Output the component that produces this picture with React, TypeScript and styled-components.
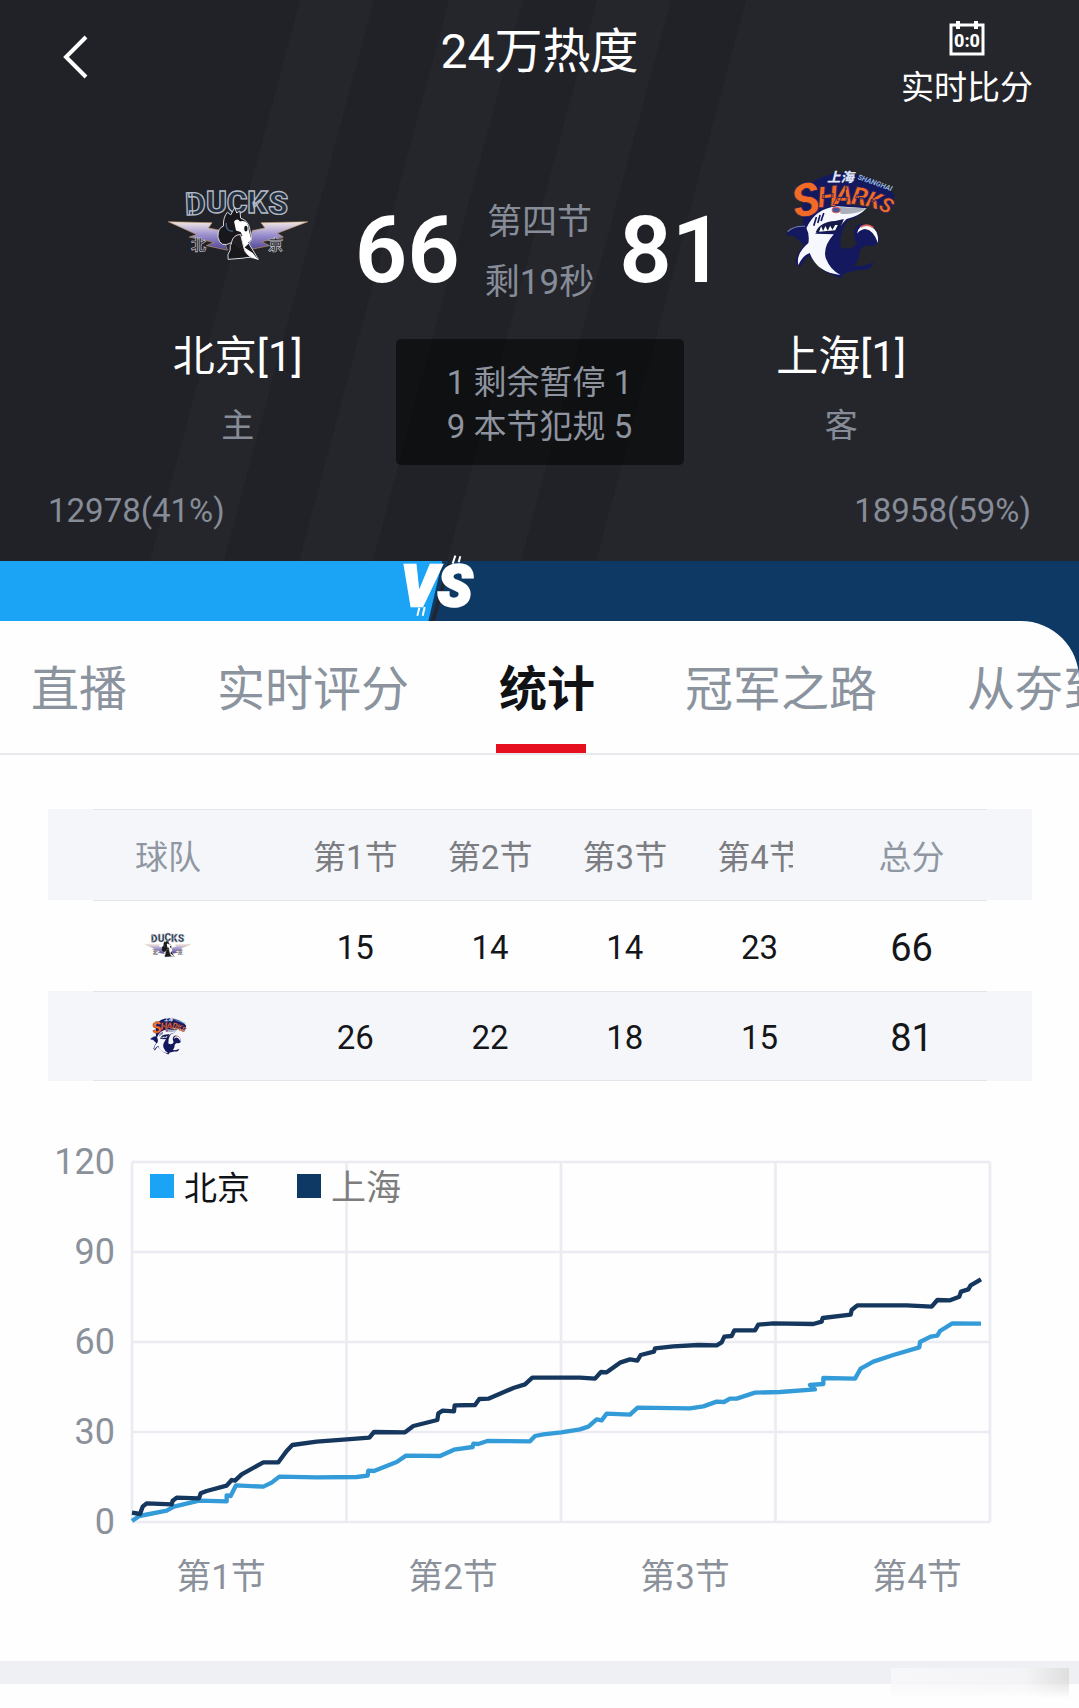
import React from "react";
import styled, { createGlobalStyle } from "styled-components";

const GlobalStyle = createGlobalStyle`
  * { box-sizing: border-box; }
  body {
    margin: 0;
    background: #fefefe;
    font-family: Roboto, "Noto Sans CJK SC", sans-serif;
    color: #15161a;
  }
  button { font: inherit; color: inherit; background: none; border: 0; padding: 0; cursor: pointer; }
`;

const muted = "#868c98";
const homeBlue = "#1ba3f5";
const awayNavy = "#0e3965";

const Page = styled.main`
  overflow: hidden;
`;

const Hero = styled.header`
  position: relative;
  background: #212227;
`;

const Stripes = styled.svg`
  position: absolute;
  inset: 0;
  width: 100%;
  height: 100%;
`;

const HeroContent = styled.div`
  position: relative;
`;

const TopBar = styled.div`
  display: grid;
  grid-template-columns: 1fr auto 1fr;
  height: 110px;
  padding: 0 46px;
  color: #fff;
`;

const BackButton = styled.button`
  justify-self: start;
  display: flex;
  align-items: center;
  height: 114px;
  padding-left: 14px;
`;

const Title = styled.h1`
  margin: 0;
  padding-top: 22px;
  font-size: 48px;
  line-height: 60px;
  font-weight: 400;
`;

const LiveScoreButton = styled.button`
  justify-self: end;
  display: flex;
  flex-direction: column;
  align-items: center;
  gap: 12px;
  padding-top: 21px;
  font-size: 33px;
  line-height: 40px;
`;

const Scoreboard = styled.div`
  display: grid;
  grid-template-columns: 1fr 364px 1fr;
  padding: 0 118px;
`;

const Team = styled.div`
  display: flex;
  flex-direction: column;
  align-items: center;
  padding-top: 55px;
`;

const LogoBox = styled.div`
  display: flex;
  align-items: center;
  height: 120px;
`;

const TeamName = styled.div`
  margin-top: 42px;
  font-size: 42px;
  line-height: 60px;
  color: #fff;
  white-space: nowrap;
`;

const TeamSide = styled.div`
  margin-top: 20px;
  font-size: 33px;
  line-height: 38px;
  color: ${muted};
`;

const Center = styled.div`
  display: flex;
  flex-direction: column;
  align-items: center;
  gap: 28px;
  padding-top: 81px;
`;

const ScoreRow = styled.div`
  display: flex;
  align-items: center;
  gap: 25px;
  height: 120px;
`;

const Score = styled.strong`
  font-size: 92px;
  line-height: 120px;
  font-weight: 600;
  color: #fff;
`;

const Clock = styled.div`
  padding-top: 4px;
  font-size: 35px;
  line-height: 60px;
  text-align: center;
  color: ${muted};
  white-space: nowrap;
`;

const FoulBox = styled.div`
  width: 288px;
  padding: 22px 0 16px;
  border-radius: 5px;
  background: rgba(0, 0, 0, 0.52);
  font-size: 33px;
  line-height: 44px;
  text-align: center;
  color: #8d939f;
`;

const HeatRow = styled.div`
  display: flex;
  justify-content: space-between;
  padding: 26px 48px 30px;
  font-size: 33px;
  line-height: 40px;
  color: ${muted};
`;

const VoteBar = styled.div`
  position: relative;
  height: 60px;
  background: ${awayNavy};
`;

const VoteHome = styled.div`
  height: 100%;
  background: ${homeBlue};
  clip-path: polygon(0 0, 100% 0, calc(100% - 14px) 100%, 0 100%);
`;

const VersusMark = styled.svg`
  position: absolute;
  top: -8px;
  transform: translateX(-50%);
  overflow: visible;
`;

const Sheet = styled.div`
  background: ${awayNavy};
`;

const Panel = styled.div`
  background: #fefefe;
  border-top-right-radius: 58px;
`;

const Tabs = styled.nav`
  display: flex;
  gap: 90px;
  height: 134px;
  padding-left: 31px;
  border-bottom: 2px solid #e7e9ec;
  border-top-right-radius: 58px;
  overflow: hidden;
`;

const Tab = styled.button<{ $active?: boolean }>`
  position: relative;
  flex: none;
  padding-top: 6px;
  font-size: 48px;
  line-height: 126px;
  font-weight: ${(p) => (p.$active ? 700 : 400)};
  color: ${(p) => (p.$active ? "#111216" : "#8b949e")};

  &::after {
    content: "";
    display: ${(p) => (p.$active ? "block" : "none")};
    position: absolute;
    left: -3px;
    bottom: 0;
    width: 90px;
    height: 9px;
    background: #e60f20;
  }
`;

const QuarterTable = styled.table`
  width: calc(100% - 95px);
  margin: 54px 47px 0 48px;
  table-layout: fixed;
  border-collapse: collapse;
`;

const TeamCol = styled.col`
  width: 240px;
`;

const TotalCol = styled.col`
  width: 205px;
`;

const Row = styled.tr<{ $shaded?: boolean; $last?: boolean }>`
  height: ${(p) => (p.$last ? "90px" : "91px")};
  background-color: ${(p) => (p.$shaded ? "#f5f6f9" : "transparent")};
  background-image: linear-gradient(#e2e5ea, #e2e5ea), linear-gradient(#e2e5ea, #e2e5ea);
  background-repeat: no-repeat;
  background-position: 45px 0, 45px 100%;
  background-size: calc(100% - 90px) 1px, calc(100% - 90px) ${(p) => (p.$last ? "1px" : "0")};
`;

const HeadCell = styled.th<{ $total?: boolean; $quarter?: boolean }>`
  padding: 6px ${(p) => (p.$total ? "36px" : "0")} 0 0;
  font-size: 33px;
  line-height: 40px;
  font-weight: 400;
  color: ${(p) => (p.$quarter ? "#7b7d82" : "#8f97a3")};
  white-space: nowrap;
`;

const ClippedLabel = styled.span`
  display: inline-block;
  clip-path: inset(0 9px 0 0);
`;

const Cell = styled.td<{ $total?: boolean }>`
  padding: 4px ${(p) => (p.$total ? "36px" : "0")} 0 0;
  font-size: ${(p) => (p.$total ? "38px" : "33px")};
  line-height: 40px;
  text-align: center;
`;

const LogoCell = styled.th`
  padding: 0;
  line-height: 0;
`;

const Chart = styled.section`
  display: grid;
  grid-template-columns: 67px 1fr;
  column-gap: 17px;
  padding: 61px 89px 0 48px;
`;

const YAxis = styled.div`
  display: flex;
  flex-direction: column;
  justify-content: space-between;
  text-align: right;
  font-size: 36px;
  line-height: 40px;
  color: #8b919b;
`;

const Plot = styled.div`
  position: relative;
  padding: 20px 0;
`;

const PlotSvg = styled.svg`
  display: block;
  width: 100%;
  height: auto;
  overflow: visible;
`;

const Legend = styled.div`
  position: absolute;
  top: 24px;
  left: 18px;
  display: flex;
  gap: 47px;
  line-height: 40px;
`;

const LegendItem = styled.div<{ $dim?: boolean }>`
  display: flex;
  align-items: center;
  gap: 10px;
  font-size: ${(p) => (p.$dim ? "35px" : "33px")};
  color: ${(p) => (p.$dim ? "#7d7d7d" : "#111216")};
`;

const LegendText = styled.span`
  padding-top: 6px;
  line-height: 34px;
`;

const Swatch = styled.span<{ $color: string }>`
  width: 24px;
  height: 24px;
  background: ${(p) => p.$color};
`;

const XAxis = styled.div`
  display: grid;
  grid-template-columns: repeat(4, 1fr);
  padding: 16px 46px 63px 105px;
  text-align: center;
  font-size: 35px;
  line-height: 40px;
  color: #8b919b;
`;

const Divider = styled.div`
  position: relative;
  height: 23px;
  margin-bottom: 24px;
  background: #eff0f4;
`;

const Smudge = styled.div`
  position: absolute;
  top: 7px;
  right: 10px;
  width: 178px;
  height: 30px;
  background: linear-gradient(90deg, #f7f7f9, #f4f4f6 75%, #dededf);
  mask-image: linear-gradient(#000 40%, transparent);
`;

const Logo = styled.svg`
  overflow: visible;
`;

function DucksLogo({ width, height }: { width: number; height: number }) {
  return (
    <Logo width={width} height={height} viewBox="48 50 432 226" preserveAspectRatio="none" role="img" aria-label="北京">
      <defs>
        <linearGradient id="wing" x1="0" y1="0" x2="0" y2="1">
          <stop offset="0" stopColor="#f3e9e4" />
          <stop offset="0.45" stopColor="#9d92cf" />
          <stop offset="1" stopColor="#4d4391" />
        </linearGradient>
      </defs>
      <g fontFamily="Roboto, sans-serif" fontWeight="900" fontSize="96" fill="#22303f" stroke="#b4bac6" strokeWidth="4">
        <text x="103" y="132" transform="rotate(-2 135 100)">D</text>
        <text x="167" y="127">U</text>
        <text x="230" y="125">C</text>
        <text x="292" y="127">K</text>
        <text x="356" y="130" transform="rotate(2 390 100)">S</text>
      </g>
      <g fill="url(#wing)" stroke="#c09868" strokeWidth="2">
        <path d="M52 153 L185 156 L174 172 L212 180 L232 240 L168 226 L190 216 L116 200 L138 192 Z" />
        <path d="M476 153 L334 156 L346 172 L308 180 L290 240 L360 226 L336 214 L402 200 L384 188 Z" />
      </g>
      <path d="M232 124 L242 132 L254 110 L260 126 L270 120 L272 142 Q296 150 300 176 L304 196 Q308 212 296 218 L326 268 Q300 258 282 264 L234 268 Q230 252 240 240 Q238 224 246 216 Q210 236 203 200 Q202 172 220 166 Q218 140 232 124 Z" fill="#17171c" stroke="#d9dbe0" strokeWidth="3" />
      <path d="M252 152 Q262 140 270 152 Q296 146 297 180 L304 206 Q298 222 286 214 L272 184 L258 180 Z" fill="#fff" />
      <path d="M270 202 Q278 188 290 206 L296 220 L284 232 L308 248 L325 268 Q286 262 276 226 Z" fill="#fff" />
      <path d="M244 216 Q250 192 272 192 L280 226 Q282 246 300 260" fill="#221d22" stroke="#ded5d2" strokeWidth="3" />
      <ellipse cx="288" cy="174" rx="5" ry="9" fill="#10141a" />
      <path d="M228 156 Q226 182 248 182" fill="none" stroke="#446785" strokeWidth="4" />
      <g fontFamily="Noto Sans CJK SC, sans-serif" fontWeight="700" fontSize="46" fill="#25232c" stroke="#c9cbd2" strokeWidth="2">
        <text x="121" y="238">北</text>
        <text x="355" y="238">京</text>
      </g>
    </Logo>
  );
}

const sharkLetters = [
  { ch: "S", x: 72, y: 172, size: 138, turn: -14 },
  { ch: "H", x: 140, y: 138, size: 88, turn: -6 },
  { ch: "A", x: 188, y: 128, size: 82, turn: 2 },
  { ch: "R", x: 236, y: 126, size: 76, turn: 10 },
  { ch: "K", x: 278, y: 132, size: 70, turn: 18 },
  { ch: "S", x: 316, y: 142, size: 64, turn: 26 },
];

function SharksLogo({ width, height }: { width: number; height: number }) {
  return (
    <Logo width={width} height={height} viewBox="40 25 335 330" preserveAspectRatio="none" role="img" aria-label="上海">
      <path d="M92 96 Q130 34 220 34 Q320 44 368 100 L356 140 Q280 108 220 128 L284 136 Q262 168 226 178 Q202 216 206 256 Q240 270 254 244 Q232 196 270 186 Q318 190 322 236 Q310 262 282 250 Q258 262 262 286 L248 312 Q280 316 306 300 Q296 330 262 324 L220 334 L206 350 L160 330 Q128 302 110 282 L84 316 L70 300 Q80 268 96 250 L66 222 Q40 224 44 214 Q66 194 94 190 Z" fill="#14195f" />
      <path d="M48 210 Q66 192 100 194" fill="none" stroke="#7683be" strokeWidth="3" />
      <path d="M104 200 Q130 140 196 134 L284 140 Q262 164 224 172 L206 192 Q150 194 130 216 L186 218 Q152 256 162 290 Q176 326 206 340 Q134 332 114 274 Q94 280 80 310 Q72 276 110 244 Q114 218 104 200 Z" fill="#f7f8fd" />
      <path d="M204 136 L284 140 Q256 160 206 156 Z" fill="#aab0bb" />
      <path d="M126 192 L134 166 M138 184 L145 160 M148 178 L156 154" stroke="#14195f" strokeWidth="5" />
      <path d="M132 212 Q144 180 190 178 L216 172 Q210 194 190 210 Z" fill="#151a49" />
      <path d="M142 210 L148 194 L154 208 L161 193 L168 207 L175 192 L182 204 L190 190 L198 190 L190 206 Z" fill="#fff" />
      <ellipse cx="193" cy="145" rx="12" ry="8" fill="#46549d" stroke="#d5635d" strokeWidth="3" />
      <path d="M256 216 Q258 190 288 190 Q322 202 318 244 Q306 206 280 202 Q264 204 256 216 Z" fill="#fff" />
      <path d="M266 196 Q286 184 304 198" fill="none" stroke="#e36456" strokeWidth="5" />
      <g fontFamily="Roboto, sans-serif" fontStyle="italic" fontWeight="900" fill="#f26a25" stroke="#14195f" strokeWidth="2">
        {sharkLetters.map((l, i) => (
          <text key={i} x={l.x} y={l.y} fontSize={l.size} transform={`rotate(${l.turn} ${l.x} ${l.y})`}>
            {l.ch}
          </text>
        ))}
      </g>
      <text x="166" y="62" fontFamily="Noto Sans CJK SC, sans-serif" fontStyle="italic" fontWeight="900" fontSize="40" fill="#dfe4f5">上海</text>
      <text x="256" y="52" fontFamily="Roboto, sans-serif" fontStyle="italic" fontWeight="700" fontSize="22" fill="#93b4d6" transform="rotate(20 256 52)">SHANGHAI</text>
    </Logo>
  );
}

const awayPath =
  "96,1118 120,1122 128,1100 140,1090 215,1093 218,1082 230,1073 297,1075 302,1060 320,1053 380,1037 395,1020 405,1022 425,1003 490,967 535,967 560,933 577,915 650,905 740,898 808,893 822,876 915,877 940,858 1012,840 1015,820 1028,812 1062,814 1064,796 1125,795 1138,777 1165,776 1240,744 1275,733 1297,713 1440,713 1485,716 1503,696 1520,697 1560,668 1590,658 1612,662 1622,645 1662,635 1665,625 1720,619 1795,615 1850,616 1865,607 1873,590 1895,588 1903,571 1965,571 1975,554 2020,550 2140,552 2165,545 2168,534 2252,524 2255,510 2272,496 2420,496 2495,500 2512,480 2550,481 2578,470 2583,455 2605,448 2612,436 2643,418";

const homePath =
  "96,1143 118,1128 200,1112 222,1100 297,1082 380,1084 380,1066 392,1068 408,1036 490,1040 515,1028 538,1010 650,1012 770,1011 803,1007 805,992 822,993 890,966 918,947 1020,948 1062,929 1118,921 1120,911 1135,912 1162,903 1290,904 1305,888 1330,883 1384,877 1440,868 1465,860 1490,838 1505,841 1520,821 1590,824 1613,803 1770,805 1810,799 1850,785 1872,786 1890,776 1910,776 1965,758 2040,756 2145,748 2130,735 2170,732 2170,714 2265,716 2282,686 2320,665 2380,645 2458,622 2460,606 2492,590 2512,587 2520,573 2557,550 2643,551";

const quarters = ["第1节", "第2节", "第3节", "第4节"];
const yTicks = [120, 90, 60, 30, 0];
const homeShare = 41;

export default function App() {
  return (
    <Page>
      <GlobalStyle />
      <Hero>
        <Stripes viewBox="0 0 1079 561" preserveAspectRatio="none" aria-hidden="true">
          <g fill="#25262b">
            <path d="M300 0 H374 L224 561 H150 Z" />
            <path d="M449 0 H523 L373 561 H299 Z" />
            <path d="M597 0 H671 L521 561 H447 Z" />
            <path d="M746 0 H1079 V561 H596 Z" />
          </g>
        </Stripes>
        <HeroContent>
          <TopBar>
            <BackButton aria-label="返回">
              <svg width="30" height="44" viewBox="0 0 30 44" fill="none" stroke="#fff" strokeWidth="4">
                <path d="M26 2 L6 22 L26 42" />
              </svg>
            </BackButton>
            <Title>24万热度</Title>
            <LiveScoreButton>
              <svg width="36" height="35" viewBox="0 0 36 35">
                <path d="M2 4 H34 V33 H2 Z" fill="none" stroke="#fff" strokeWidth="3" />
                <path d="M9 0 V8 M27 0 V8" stroke="#fff" strokeWidth="4" />
                <text x="18" y="26" textAnchor="middle" fontSize="18" fontWeight="800" fill="#fff">0:0</text>
              </svg>
              实时比分
            </LiveScoreButton>
          </TopBar>
          <Scoreboard>
            <Team>
              <LogoBox><DucksLogo width={142} height={74} /></LogoBox>
              <TeamName>北京[1]</TeamName>
              <TeamSide>主</TeamSide>
            </Team>
            <Center>
              <ScoreRow>
                <Score>66</Score>
                <Clock>
                  <div>第四节</div>
                  <div>剩19秒</div>
                </Clock>
                <Score>81</Score>
              </ScoreRow>
              <FoulBox>
                <div>1 剩余暂停 1</div>
                <div>9 本节犯规 5</div>
              </FoulBox>
            </Center>
            <Team>
              <LogoBox><SharksLogo width={112} height={110} /></LogoBox>
              <TeamName>上海[1]</TeamName>
              <TeamSide>客</TeamSide>
            </Team>
          </Scoreboard>
          <HeatRow>
            <span>12978(41%)</span>
            <span>18958(59%)</span>
          </HeatRow>
        </HeroContent>
      </Hero>
      <VoteBar>
        <VoteHome style={{ width: `${homeShare}%` }} />
        <VersusMark width="76" height="68" viewBox="64 36 228 204" style={{ left: `${homeShare}%` }} role="img" aria-label="VS">
          <path d="M196 60 H206 L158 240 H144 Z" fill="#202733" />
          <text x="56" y="194" fontSize="170" fontFamily="Roboto, sans-serif" fontStyle="italic" fontWeight="900" fill="#fff" stroke="#fff" strokeWidth="8">VS</text>
          <path d="M110 200 L104 224 M126 198 L120 224 M218 44 L210 68 M233 46 L228 64" stroke="#fff" strokeWidth="6" />
        </VersusMark>
      </VoteBar>
      <Sheet>
        <Panel>
          <Tabs>
            <Tab>直播</Tab>
            <Tab>实时评分</Tab>
            <Tab $active aria-current="page">统计</Tab>
            <Tab>冠军之路</Tab>
            <Tab>从夯到拉</Tab>
          </Tabs>
          <QuarterTable>
            <colgroup>
              <TeamCol />
              <col />
              <col />
              <col />
              <col />
              <TotalCol />
            </colgroup>
            <thead>
              <Row $shaded>
                <HeadCell>球队</HeadCell>
                {quarters.map((q, i) => (
                  <HeadCell key={q} $quarter>{i === 3 ? <ClippedLabel>{q}</ClippedLabel> : q}</HeadCell>
                ))}
                <HeadCell $total>总分</HeadCell>
              </Row>
            </thead>
            <tbody>
              <Row>
                <LogoCell scope="row"><DucksLogo width={46} height={25} /></LogoCell>
                {[15, 14, 14, 23].map((n, i) => <Cell key={i}>{n}</Cell>)}
                <Cell $total>66</Cell>
              </Row>
              <Row $shaded $last>
                <LogoCell scope="row"><SharksLogo width={37} height={38} /></LogoCell>
                {[26, 22, 18, 15].map((n, i) => <Cell key={i}>{n}</Cell>)}
                <Cell $total>81</Cell>
              </Row>
            </tbody>
          </QuarterTable>
          <Chart>
            <YAxis>
              {yTicks.map((t) => <span key={t}>{t}</span>)}
            </YAxis>
            <Plot>
              <PlotSvg viewBox="96 66 2574 1080" role="img" aria-label="得分走势">
                <g stroke="#ebecf2" strokeWidth="8" fill="none">
                  {yTicks.map((t) => <path key={t} d={`M96 ${66 + t * 9} H2670`} />)}
                  {[0, 1, 2, 3, 4].map((i) => <path key={i} d={`M${96 + i * 643.5} 66 V1146`} />)}
                </g>
                <g fill="none" strokeWidth="13" strokeLinejoin="round">
                  <polyline points={homePath} stroke="#349bd9" />
                  <polyline points={awayPath} stroke="#15365d" />
                </g>
              </PlotSvg>
              <Legend>
                <LegendItem><Swatch $color={homeBlue} /><LegendText>北京</LegendText></LegendItem>
                <LegendItem $dim><Swatch $color={awayNavy} /><LegendText>上海</LegendText></LegendItem>
              </Legend>
            </Plot>
          </Chart>
          <XAxis>
            {quarters.map((q) => <span key={q}>{q}</span>)}
          </XAxis>
          <Divider><Smudge /></Divider>
        </Panel>
      </Sheet>
    </Page>
  );
}
